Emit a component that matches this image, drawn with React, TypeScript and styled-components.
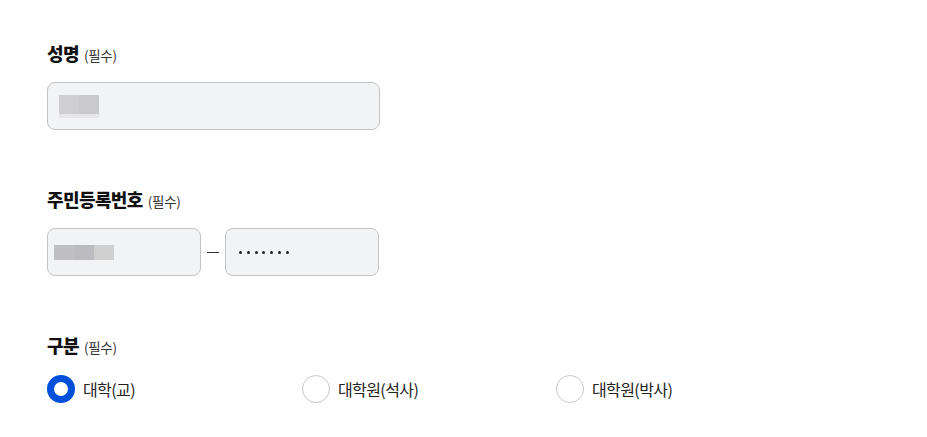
import React from "react";
import styled, { createGlobalStyle } from "styled-components";

const Global = createGlobalStyle`
  html, body { margin: 0; padding: 0; background: #fff; }
  body { font-family: "Noto Sans CJK KR", "Noto Sans", sans-serif; color: #111; }
  * { box-sizing: border-box; }
`;

const Page = styled.div`
  padding: 40px 0 0 47px;
  display: flex;
  flex-direction: column;
  gap: 56px;
`;

const Field = styled.div`
  display: flex;
  flex-direction: column;
  gap: 14px;
`;

const Label = styled.div`
  display: flex;
  align-items: baseline;
  gap: 5px;
  font-size: 18px;
  font-weight: 800;
  line-height: 26px;
  letter-spacing: -0.6px;
  color: #111;
`;

const Required = styled.span`
  font-size: 13.5px;
  font-weight: 400;
  color: #333;
  letter-spacing: -0.3px;
`;

const InputBox = styled.div<{ $w: number; $pad?: number }>`
  width: ${(p) => p.$w}px;
  height: 48px;
  border: 1px solid #c4c4c6;
  border-radius: 8px;
  background: #f2f3f5;
  display: flex;
  align-items: center;
  padding-left: ${(p) => p.$pad ?? 11}px;
`;

const Mask = styled.div`
  display: flex;
  flex-direction: column;
`;

const MaskRow = styled.div`
  display: flex;
`;

const Cell = styled.div<{ $c: string; $w: number; $h: number }>`
  width: ${(p) => p.$w}px;
  height: ${(p) => p.$h}px;
  background: ${(p) => p.$c};
`;

const Strip = styled.div<{ $w: number }>`
  width: ${(p) => p.$w}px;
  height: 4px;
  background: #e6e6e8;
`;

const Row = styled.div`
  display: flex;
  align-items: center;
`;

const Dash = styled.div`
  width: 12px;
  height: 1px;
  background: #333;
  margin: 0 6px 0 6px;
`;

const Dots = styled.div`
  display: flex;
  gap: 4.8px;
  padding-left: 2px;
`;

const Dot = styled.span`
  width: 3px;
  height: 3px;
  border-radius: 50%;
  background: #222;
`;

const Radios = styled.div`
  display: grid;
  grid-template-columns: 255px 254px auto;
`;

const RadioItem = styled.label`
  display: flex;
  align-items: center;
  gap: 8px;
  font-size: 16px;
  letter-spacing: -0.6px;
  color: #222;
  height: 30px;
`;

const Circle = styled.span<{ $on?: boolean }>`
  width: 28px;
  height: 28px;
  border-radius: 50%;
  background: #fff;
  border: ${(p) => (p.$on ? "7px solid #0050db" : "1px solid #c8c8c8")};
`;

export default function App() {
  return (
    <>
      <Global />
      <Page>
        <Field>
          <Label>
            성명<Required>(필수)</Required>
          </Label>
          <InputBox $w={333}>
            <Mask>
              <MaskRow>
                <Cell $c="#cfcfd2" $w={20} $h={19} />
                <Cell $c="#cacacc" $w={20} $h={19} />
              </MaskRow>
              <Strip $w={40} />
            </Mask>
          </InputBox>
        </Field>
        <Field>
          <Label>
            주민등록번호<Required>(필수)</Required>
          </Label>
          <Row>
            <InputBox $w={154} $pad={6}>
              <MaskRow>
                <Cell $c="#c0c0c2" $w={20} $h={15} />
                <Cell $c="#bcbcc0" $w={20} $h={15} />
                <Cell $c="#cfcfd0" $w={20} $h={15} />
              </MaskRow>
            </InputBox>
            <Dash />
            <InputBox $w={154}>
              <Dots>
                {Array.from({ length: 7 }).map((_, i) => (
                  <Dot key={i} />
                ))}
              </Dots>
            </InputBox>
          </Row>
        </Field>
        <Field>
          <Label>
            구분<Required>(필수)</Required>
          </Label>
          <Radios>
            <RadioItem>
              <Circle $on />
              대학(교)
            </RadioItem>
            <RadioItem>
              <Circle />
              대학원(석사)
            </RadioItem>
            <RadioItem>
              <Circle />
              대학원(박사)
            </RadioItem>
          </Radios>
        </Field>
      </Page>
    </>
  );
}
